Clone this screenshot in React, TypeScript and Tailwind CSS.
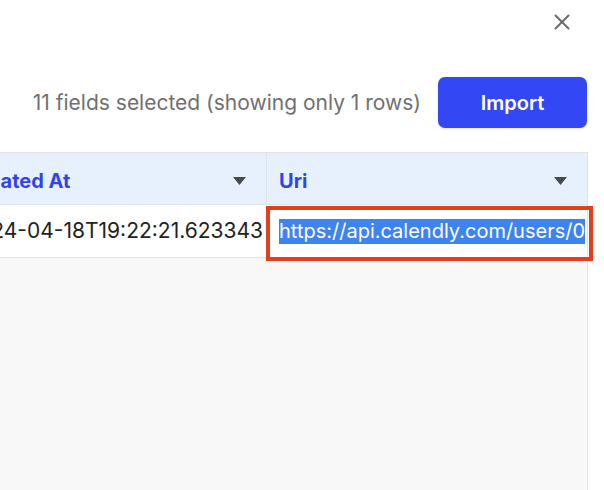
import { X } from 'lucide-react';

function SortArrow() {
  return (
    <svg width="13" height="8" viewBox="0 0 13 8" className="shrink-0">
      <path d="M0 0 L13 0 L6.5 8 Z" fill="#4a4a4a" />
    </svg>
  );
}

export default function App() {
  return (
    <div className="relative w-[604px] h-[490px] bg-white overflow-hidden font-['Inter',sans-serif]">
      <div className="flex justify-end pt-[9px] pr-[29px]">
        <X className="w-[26px] h-[26px] text-[#6b6b6b]" strokeWidth={1.8} />
      </div>

      <div className="flex items-center justify-end gap-[17px] mt-[42px] pr-[17px]">
        <span className="text-[21px] text-[#707070] whitespace-nowrap">
          11 fields selected (showing only 1 rows)
        </span>
        <button className="w-[149px] h-[51px] shrink-0 rounded-[7px] bg-[#3347f4] text-white text-[20px] font-semibold shadow-sm">
          Import
        </button>
      </div>

      <div className="mt-[24px] w-[588px] h-[338px] border-t border-r border-[#e2e2e2] bg-[#f8f8f8] overflow-hidden">
        <div className="flex h-[52px] bg-[#e7f0fd] border-b border-[#e0e4ea]">
          <div className="w-[267px] shrink-0 overflow-hidden border-r border-[#dde3ec]">
            <div className="flex items-center h-full ml-[-46px] pl-[12px] pr-[20px] pt-[5px]">
              <span className="flex-1 text-[20px] font-bold text-[#2f45ea] whitespace-nowrap">Created At</span>
              <SortArrow />
            </div>
          </div>
          <div className="flex-1 flex items-center pl-[12px] pr-[20px] pt-[5px]">
            <span className="flex-1 text-[20px] font-bold text-[#2f45ea]">Uri</span>
            <SortArrow />
          </div>
        </div>
        <div className="flex h-[53px] bg-white border-b border-[#e6e6e6]">
          <div className="w-[267px] shrink-0 overflow-hidden">
            <div className="flex items-center justify-end h-full pr-[4px] whitespace-nowrap text-[21px] text-[#222]">
              2024-04-18T19:22:21.623343
            </div>
          </div>
          <div className="flex-1 flex items-center pl-[12px] whitespace-nowrap overflow-hidden text-[20px]">
            <span className="bg-[#3d84f0] text-white leading-[25px]">https://api.calendly.com/users/0</span>
          </div>
        </div>
      </div>

      <div className="absolute left-[266px] top-[206px] w-[327px] h-[55px] border-[4px] border-[#e53e1f] pointer-events-none" />
    </div>
  );
}
